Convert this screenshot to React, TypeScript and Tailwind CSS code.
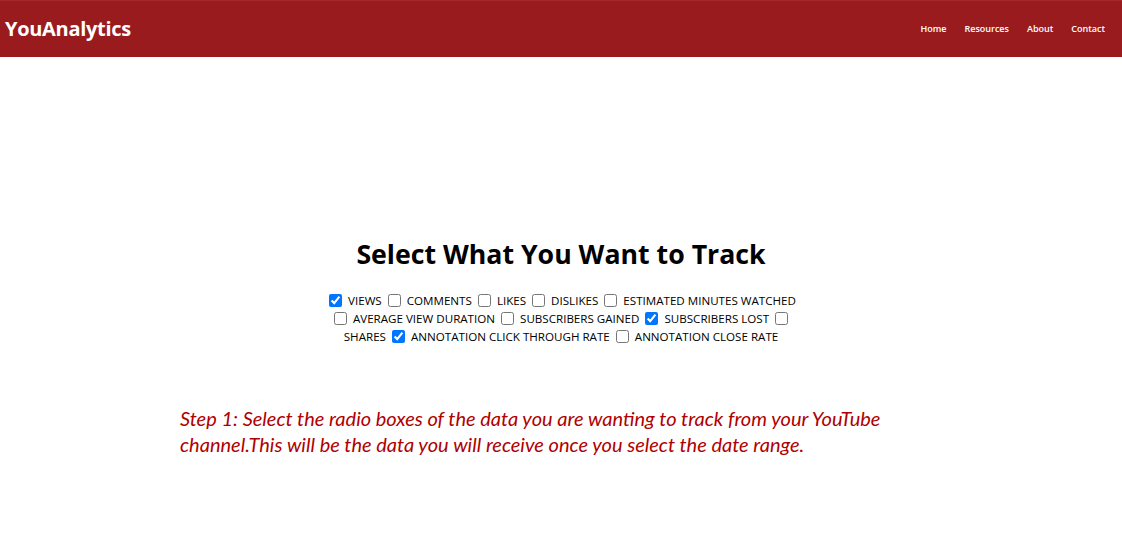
import React from "react";

const items: [string, boolean][] = [
  ["VIEWS", true],
  ["COMMENTS", false],
  ["LIKES", false],
  ["DISLIKES", false],
  ["ESTIMATED MINUTES WATCHED", false],
  ["AVERAGE VIEW DURATION", false],
  ["SUBSCRIBERS GAINED", false],
  ["SUBSCRIBERS LOST", true],
  ["SHARES", false],
  ["ANNOTATION CLICK THROUGH RATE", true],
  ["ANNOTATION CLOSE RATE", false],
];

export default function App() {
  return (
    <div className="min-h-[553px] w-full bg-white" style={{ fontFamily: '"Open Sans", "Noto Sans", sans-serif' }}>
      <header className="flex h-[57px] items-center justify-between bg-[#9a1b1e] pl-[5px] pr-[17px] border-t border-[#a3292b]">
        <div className="text-[20px] font-bold tracking-[-0.3px] text-white">YouAnalytics</div>
        <nav className="flex gap-[18px] text-[9px] font-semibold text-white">
          <span>Home</span>
          <span>Resources</span>
          <span>About</span>
          <span>Contact</span>
        </nav>
      </header>
      <main className="flex flex-col items-center pt-[179px]">
        <h1 className="text-[26.7px] font-bold leading-[36px] text-black">Select What You Want to Track</h1>
        <div className="mt-[20px] w-[475px] text-center text-[11.6px] leading-[18px] text-black">
          {items.map(([label, checked], i) => (
            <React.Fragment key={label}>
              <input type="checkbox" defaultChecked={checked} className="mx-[3px] h-[13px] w-[13px] align-[-2px] accent-[#0075ff]" />
              {" "}
              {label}
              {i < items.length - 1 ? " " : ""}
            </React.Fragment>
          ))}
        </div>
        <div className="mt-[59px] w-full pl-[180px]">
          <p className="w-[720px] text-[20px] italic leading-[26px] text-[#b00000]" style={{ fontFamily: 'Lato, "Noto Sans", sans-serif' }}>
            Step 1: Select the radio boxes of the data you are wanting to track from your YouTube channel.This will be the data you will receive once you select the date range.
          </p>
        </div>
      </main>
    </div>
  );
}
